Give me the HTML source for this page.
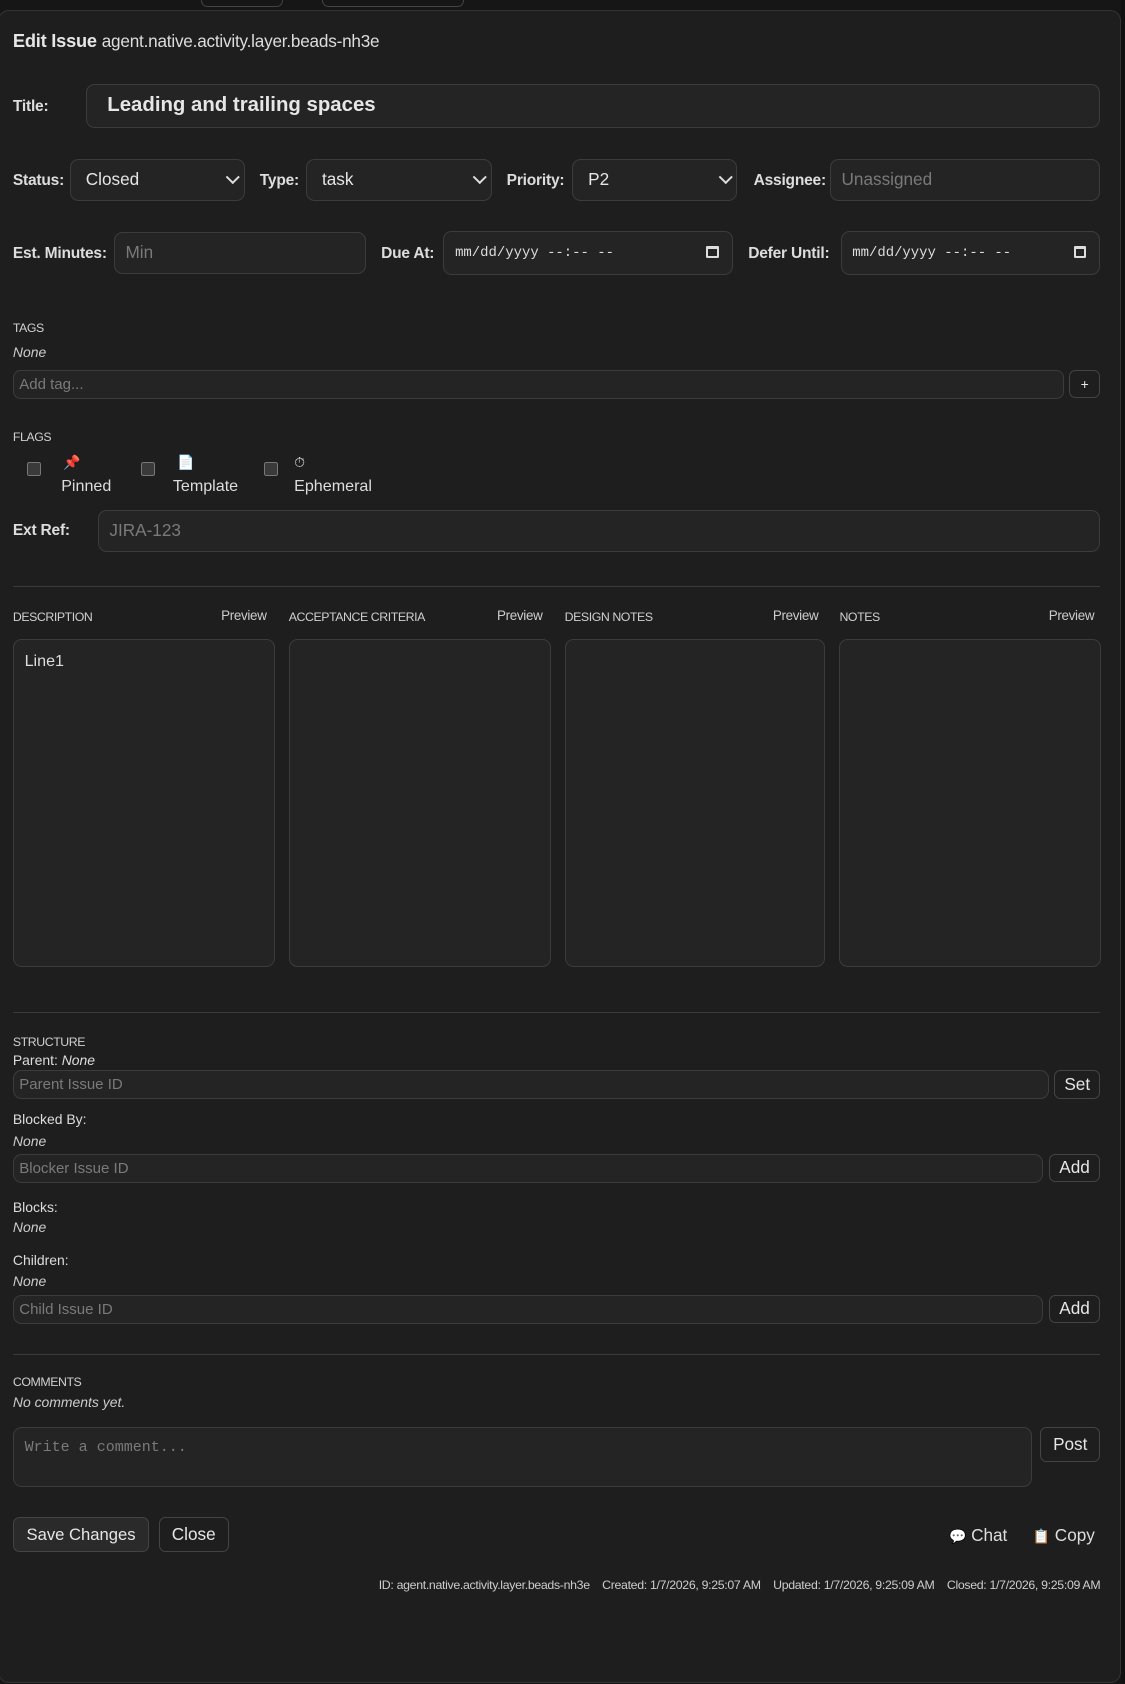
<!DOCTYPE html>
<html><head><meta charset="utf-8"><style>
html{zoom:1.07347}
body{margin:0;width:1048px;height:1568px;background:#161616;overflow:hidden;font-family:"Liberation Sans","DejaVu Sans",sans-serif;color:#e6e6e6;position:relative}
.a{position:absolute}
.dlg{position:absolute;left:-2px;top:9px;width:1044px;height:1557px;background:#1e1e1e;border:1px solid #333;border-radius:10px}
.in{position:absolute;background:#242424;border:1px solid #3c3c3c;border-radius:8px;box-sizing:border-box;color:#7a7a7a;font-size:16px;padding-left:10px;display:flex;align-items:center}
.lbl{position:absolute;font-size:14.5px;font-weight:bold;color:#ddd;letter-spacing:-0.2px}
.sec{position:absolute;font-size:11.5px;color:#d0d0d0;letter-spacing:-0.4px}
.it{position:absolute;font-size:13px;font-style:italic;color:#ccc}
.sm{position:absolute;font-size:13px;color:#ddd}
.btn{position:absolute;background:#1e1e1e;border:1px solid #444;border-radius:6px;box-sizing:border-box;color:#e6e6e6;font-size:16px;display:flex;align-items:center;justify-content:center}
.sel{color:#e6e6e6}
.chev{position:absolute;right:6px;top:50%;width:7px;height:7px;border-right:2px solid #ddd;border-bottom:2px solid #ddd;transform:rotate(45deg);margin-top:-7px}
.hr{position:absolute;left:12px;width:1013px;height:1px;background:#3a3a3a}
.cb{position:absolute;width:13px;height:13px;border:1px solid #777;border-radius:2px;background:#3a3a3a;box-sizing:border-box}
.ta{position:absolute;top:595px;height:306px;background:#242424;border:1px solid #3c3c3c;border-radius:8px;box-sizing:border-box}
.pv{position:absolute;top:566px;font-size:12.5px;color:#ccc;letter-spacing:-0.3px}
.date{color:#ddd;font-family:"Liberation Mono",monospace;font-size:13px}
.cal{position:absolute;right:12px;top:13px;width:12px;height:11px;border:2px solid #ddd;border-top-width:3px;border-radius:1px;box-sizing:border-box}
</style></head><body>
<div class="a" style="left:187px;top:-6px;width:75px;height:11px;border:1px solid #444;border-radius:6px"></div>
<div class="a" style="left:300px;top:-6px;width:130px;height:11px;border:1px solid #444;border-radius:6px"></div>
<div class="a" style="left:1044px;top:0;width:4px;height:1568px;background:#111"></div>
<div class="dlg"></div>

<div class="a" style="left:12px;top:28px;font-size:17px;letter-spacing:-0.2px"><b>Edit Issue</b> <span style="font-size:16px;color:#ddd">agent.native.activity.layer.beads-nh3e</span></div>

<div class="lbl" style="left:12px;top:91px">Title:</div>
<div class="in" style="left:80px;top:78px;width:945px;height:41px;color:#e6e6e6;font-weight:bold;font-size:19px;padding-left:19px">Leading and trailing spaces</div>

<div class="lbl" style="left:12px;top:160px">Status:</div>
<div class="in sel" style="left:65px;top:148px;width:163px;height:39px;padding-left:14px">Closed<div class="chev"></div></div>
<div class="lbl" style="left:242px;top:160px">Type:</div>
<div class="in sel" style="left:285px;top:148px;width:173px;height:39px;padding-left:14px">task<div class="chev"></div></div>
<div class="lbl" style="left:472px;top:160px">Priority:</div>
<div class="in sel" style="left:533px;top:148px;width:154px;height:39px;padding-left:14px">P2<div class="chev"></div></div>
<div class="lbl" style="left:702px;top:160px">Assignee:</div>
<div class="in" style="left:773px;top:148px;width:252px;height:39px">Unassigned</div>

<div class="lbl" style="left:12px;top:228px">Est. Minutes:</div>
<div class="in" style="left:106px;top:216px;width:235px;height:39px">Min</div>
<div class="lbl" style="left:355px;top:228px">Due At:</div>
<div class="in" style="left:413px;top:215px;width:270px;height:41px"><span class="date">mm/dd/yyyy --:-- --</span><div class="cal"></div></div>
<div class="lbl" style="left:697px;top:228px">Defer Until:</div>
<div class="in" style="left:783px;top:215px;width:242px;height:41px"><span class="date">mm/dd/yyyy --:-- --</span><div class="cal"></div></div>

<div class="sec" style="left:12px;top:299px">TAGS</div>
<div class="it" style="left:12px;top:320px">None</div>
<div class="in" style="left:12px;top:345px;width:979px;height:27px;font-size:14px;padding-left:5px;border-radius:7px">Add tag...</div>
<div class="btn" style="left:996px;top:345px;width:29px;height:26px;font-size:13px">+</div>

<div class="sec" style="left:12px;top:401px">FLAGS</div>
<div class="cb" style="left:25px;top:430px"></div>
<div class="a" style="left:59px;top:423px;font-size:13px;color:#e0245e">📌</div>
<div class="a" style="left:57px;top:444px;font-size:15px;color:#ddd">Pinned</div>
<div class="cb" style="left:131px;top:430px"></div>
<div class="a" style="left:165px;top:423px;font-size:13px">📄</div>
<div class="a" style="left:161px;top:444px;font-size:15px;color:#ddd">Template</div>
<div class="cb" style="left:246px;top:430px"></div>
<div class="a" style="left:274px;top:423px;font-size:13px;color:#ddd">⏱</div>
<div class="a" style="left:274px;top:444px;font-size:15px;color:#ddd">Ephemeral</div>

<div class="lbl" style="left:12px;top:486px">Ext Ref:</div>
<div class="in" style="left:91px;top:475px;width:934px;height:39px">JIRA-123</div>

<div class="hr" style="top:546px"></div>

<div class="sec" style="left:12px;top:568px">DESCRIPTION</div><div class="pv" style="left:206px">Preview</div>
<div class="sec" style="left:269px;top:568px">ACCEPTANCE CRITERIA</div><div class="pv" style="left:463px">Preview</div>
<div class="sec" style="left:526px;top:568px">DESIGN NOTES</div><div class="pv" style="left:720px">Preview</div>
<div class="sec" style="left:782px;top:568px">NOTES</div><div class="pv" style="left:977px">Preview</div>
<div class="ta" style="left:12px;width:244px"><div class="a" style="left:10px;top:11px;font-size:15px;color:#ddd">Line1</div></div>
<div class="ta" style="left:269px;width:244px"></div>
<div class="ta" style="left:526px;width:243px"></div>
<div class="ta" style="left:782px;width:244px"></div>

<div class="hr" style="top:943px"></div>
<div class="sec" style="left:12px;top:964px">STRUCTURE</div>
<div class="sm" style="left:12px;top:980px">Parent: <i>None</i></div>
<div class="in" style="left:12px;top:997px;width:965px;height:27px;font-size:14px;padding-left:5px">Parent Issue ID</div>
<div class="btn" style="left:982px;top:997px;width:43px;height:27px">Set</div>
<div class="sm" style="left:12px;top:1035px">Blocked By:</div>
<div class="it" style="left:12px;top:1055px">None</div>
<div class="in" style="left:12px;top:1075px;width:960px;height:27px;font-size:14px;padding-left:5px">Blocker Issue ID</div>
<div class="btn" style="left:977px;top:1075px;width:48px;height:26px">Add</div>
<div class="sm" style="left:12px;top:1117px">Blocks:</div>
<div class="it" style="left:12px;top:1136px">None</div>
<div class="sm" style="left:12px;top:1166px">Children:</div>
<div class="it" style="left:12px;top:1186px">None</div>
<div class="in" style="left:12px;top:1206px;width:960px;height:27px;font-size:14px;padding-left:5px">Child Issue ID</div>
<div class="btn" style="left:977px;top:1206px;width:48px;height:26px">Add</div>

<div class="hr" style="top:1261px"></div>
<div class="sec" style="left:12px;top:1281px">COMMENTS</div>
<div class="it" style="left:12px;top:1299px">No comments yet.</div>
<div class="in" style="left:12px;top:1329px;width:949px;height:56px;align-items:flex-start;padding-top:10px;font-family:'Liberation Mono',monospace;font-size:14px">Write a comment...</div>
<div class="btn" style="left:969px;top:1329px;width:56px;height:33px">Post</div>

<div class="btn" style="left:12px;top:1413px;width:127px;height:33px;background:#2a2a2a;font-size:15.5px">Save Changes</div>
<div class="btn" style="left:148px;top:1413px;width:65px;height:33px">Close</div>
<div class="a" style="left:884px;top:1421px;font-size:16px;color:#ddd"><span style="font-size:13px">💬</span> Chat</div>
<div class="a" style="left:962px;top:1421px;font-size:16px;color:#ddd"><span style="font-size:13px">📋</span> Copy</div>

<div class="a" style="right:23px;top:1470px;font-size:11.5px;color:#ccc;white-space:nowrap;letter-spacing:-0.3px">ID: agent.native.activity.layer.beads-nh3e&nbsp;&nbsp;&nbsp; Created: 1/7/2026, 9:25:07 AM&nbsp;&nbsp;&nbsp; Updated: 1/7/2026, 9:25:09 AM&nbsp;&nbsp;&nbsp; Closed: 1/7/2026, 9:25:09 AM</div>
</body></html>
